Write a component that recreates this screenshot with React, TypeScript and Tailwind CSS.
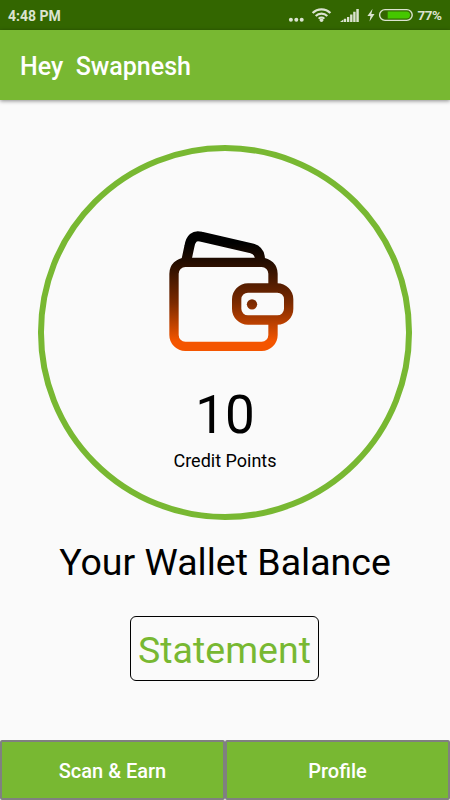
import React from 'react';

function StatusBar() {
  return (
    <div className="flex h-[30px] shrink-0 items-center bg-[#336600] pl-2 text-[#dbe3d0]">
      <span className="w-[277px] pt-0.5 text-[14px] leading-none font-bold">4:48 PM</span>
      <svg className="h-[30px] w-[130px] shrink-0" viewBox="285 0 130 30" fill="currentColor">
        <circle cx="290.9" cy="19.7" r="2" />
        <circle cx="296.3" cy="19.7" r="2" />
        <circle cx="301.7" cy="19.7" r="2" />
        <g fill="none" stroke="currentColor" strokeWidth="2.2">
          <path d="M312.6 13a12.6 12.6 0 0 1 17.8 0" />
          <path d="M315.7 16a8.2 8.2 0 0 1 11.6 0" />
          <path d="M318.7 18.8a4 4 0 0 1 5.6 0" />
        </g>
        <circle cx="321.5" cy="20.3" r="1.8" />
        <path d="M340 22l3.4-2.4V22zM343.9 18.8h2.3V22h-2.3zM347 17h2.3v5H347zM350.1 14.5h2.4V22h-2.4zM353.2 11.8h2.4V22h-2.4zM356.3 9h2.5v13h-2.5z" />
        <path d="M372.6 8.8l-5.2 7.2h3.1l-1 5.6 5-7.5h-3.2z" />
        <rect x="379.6" y="9.6" width="32.6" height="10.8" rx="5.4" fill="none" stroke="currentColor" strokeWidth="1.4" />
        <path d="M387.7 11.5h18.8a3.5 3.5 0 0 1 0 7h-18.8z" fill="#45c700" />
      </svg>
      <span className="ml-[2.5px] pt-0.5 text-[13.5px] leading-none font-bold tracking-[-0.5px]">77%</span>
    </div>
  );
}

function WalletIcon() {
  return (
    <svg className="h-[140px] w-[150px]" viewBox="0 0 450 420" fill="none">
      <defs>
        <linearGradient id="wallet" gradientUnits="userSpaceOnUse" x1="0" y1="33" x2="0" y2="393">
          <stop offset="0.1" stopColor="#000000" />
          <stop offset="0.28" stopColor="#2a0f00" />
          <stop offset="0.6" stopColor="#7c2a00" />
          <stop offset="0.92" stopColor="#f45500" />
          <stop offset="1" stopColor="#f45500" />
        </linearGradient>
      </defs>
      <g stroke="url(#wallet)" strokeWidth="28">
        <path d="M94 122L103 80Q109 42 138 50L290 85Q316 92 315 122" strokeWidth="30" />
        <path d="M354 204V161a34 34 0 0 0-34-34H91a34 34 0 0 0-34 34V345a34 34 0 0 0 34 34H320a34 34 0 0 0 34-34V300" />
        <rect x="245" y="204" width="156" height="96" rx="34" />
      </g>
      <circle cx="291" cy="253" r="15.5" fill="url(#wallet)" />
    </svg>
  );
}

function BalanceCircle({ points }: { points: number }) {
  return (
    <div className="mt-[45px] flex h-[375px] w-[374px] shrink-0 flex-col items-center rounded-full border-[6px] border-[#78b832] pt-[69px]">
      <div className="mr-[-10px]">
        <WalletIcon />
      </div>
      <span className="mt-6 text-[53px] leading-[62px]">{points}</span>
      <span className="mt-1 text-[18px] leading-[21px]">Credit Points</span>
    </div>
  );
}

const tabs = ['Scan & Earn', 'Profile'];

export default function App() {
  return (
    <div className="flex h-[800px] w-[450px] flex-col overflow-hidden bg-[#fafafa] font-[Roboto,sans-serif] text-black">
      <StatusBar />
      <header className="flex h-[70px] shrink-0 items-center bg-[#78b832] pt-[3px] pl-5 shadow-[0_1px_4px_rgba(0,0,0,0.45)]">
        <h1 className="text-[25px] font-medium whitespace-pre text-white">{'Hey  Swapnesh'}</h1>
      </header>

      <main className="flex flex-1 flex-col items-center">
        <BalanceCircle points={10} />
        <h2 className="mt-5 text-[37.5px] leading-[44px]">Your Wallet Balance</h2>
        <button className="mt-8 mr-px flex h-[65px] w-[189px] items-center justify-center rounded-[6px] border border-black pt-1 text-[37.5px] leading-none text-[#78b832]">
          Statement
        </button>
      </main>

      <nav className="flex h-[60px] shrink-0">
        {tabs.map((tab) => (
          <button
            key={tab}
            className="flex-1 rounded-[2px] border-2 border-[#808080] bg-[#78b832] pt-0.5 text-[20px] font-medium text-white"
          >
            {tab}
          </button>
        ))}
      </nav>
    </div>
  );
}
